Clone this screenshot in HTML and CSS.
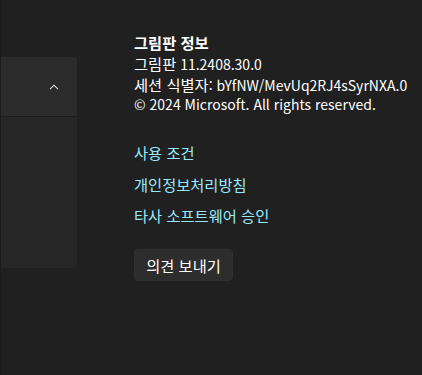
FILE: index.html
```html
<!DOCTYPE html>
<html lang="ko">
  <head>
    <meta charset="utf-8">
    <title>그림판 정보</title>
    <link rel="stylesheet" href="styles.css">
  </head>
  <body>
  <div class="page">
    <div class="side">
      <div class="card">
        <div class="card-head">
          <svg class="chevron" width="10" height="6" viewBox="0 0 10 6">
            <path d="M1 5.2 L5 1.2 L9 5.2" fill="none" stroke="#e6e6e6" stroke-width="1.1"/>
          </svg>
        </div>
        <div class="card-body"></div>
      </div>
    </div>
    <div class="about">
      <h2 class="ko">그림판 정보</h2>
      <p><span class="ko">그림판</span> 11.2408.30.0</p>
      <p><span class="ko">세션 식별자</span>: bYfNW/MevUq2RJ4sSyrNXA.0</p>
      <p>© 2024 Microsoft. All rights reserved.</p>
      <div class="links">
        <a class="ko" href="#">사용 조건</a>
        <a class="ko" href="#">개인정보처리방침</a>
        <a class="ko" href="#">타사 소프트웨어 승인</a>
      </div>
      <button class="feedback ko">의견 보내기</button>
    </div>
  </div>
  </body>
</html>
```
FILE: styles.css
```css
* {
  box-sizing: border-box;
  margin: 0px;
  padding: 0px;
}
html, body {
  height: 100%;
  background-color: #202020;
}
body {
  font-family: "Segoe UI", "Noto Sans CJK KR", sans-serif;
  font-size: 14px;
  color: #ffffff;
  overflow: hidden;
}
.ko {
  font-size: 15.3px;
}
.page {
  display: flex;
  height: 100%;
  border-left: 1px solid #1b1b1b;
}
.side {
  width: 76px;
  padding-top: 57px;
}
.card {
  height: 211px;
  background-color: #272727;
  border-radius: 0px 4px 4px 0px;
  display: flex;
  flex-direction: column;
  overflow: hidden;
}
.card-head {
  height: 60px;
  background-color: #2b2b2b;
  border-bottom: 1px solid #1c1c1c;
  display: flex;
  align-items: center;
  justify-content: flex-end;
  padding-right: 18px;
}
.chevron {
  display: block;
}
.card-body {
  flex: 1;
}
.about {
  padding-left: 57px;
  padding-top: 32px;
}
.about h2 {
  font-weight: bold;
  line-height: 20px;
  margin-bottom: 2px;
}
.about p {
  line-height: 19.5px;
}
.links {
  display: flex;
  flex-direction: column;
  align-items: flex-start;
  gap: 11.5px;
  margin-top: 27.5px;
}
.links a {
  color: #99ebff;
  text-decoration: none;
  line-height: 20px;
}
.feedback {
  margin-top: 24px;
  width: 99px;
  height: 32px;
  background-color: #2d2d2d;
  border: 1px solid #303030;
  border-radius: 4px;
  color: #ffffff;
  font-family: inherit;
}
```
